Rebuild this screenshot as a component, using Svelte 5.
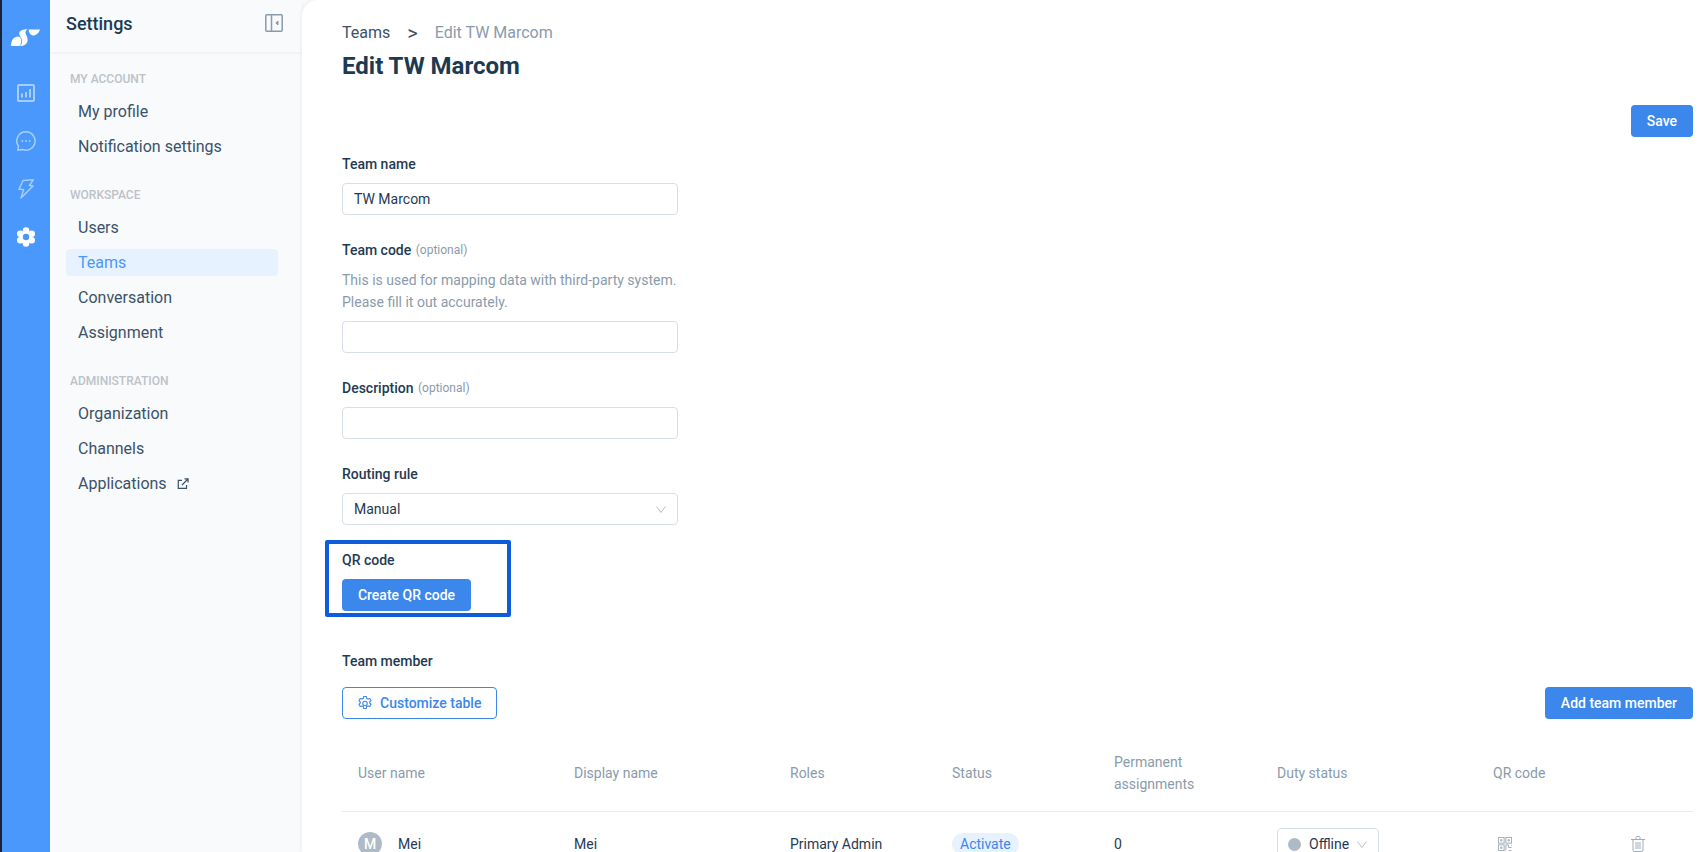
<script>
  const navSections = [
    { title: 'MY ACCOUNT', items: ['My profile', 'Notification settings'] },
    { title: 'WORKSPACE', items: ['Users', 'Teams', 'Conversation', 'Assignment'] },
    { title: 'ADMINISTRATION', items: ['Organization', 'Channels', 'Applications'] }
  ];

  const columns = ['User name', 'Display name', 'Roles', 'Status', 'Permanent assignments', 'Duty status', 'QR code', ''];
</script>

<div class="layout">
  <nav class="rail">
    <svg class="logo" viewBox="0 0 30 18" width="30" height="18">
      <path d="M0 18C0 12 3 8.500 7 8.500c1.300 0 2.200.8 2.800 2 .8 2.500.6 5-1.300 7.500z" fill="#fff" />
      <path d="M8.500 4C10 2 13 1 16.500 1.200 14.500 2.500 14 4 14.800 6c1 2.500 2.200 4 1.700 7-.5 3-3.500 5-7.500 5 2.500-2.500 2.500-5 1.500-7.500-1-2-3-4-2-6.500z" fill="#fff" />
      <path d="M17.500 1.500H29C28 5 25 7.500 22 7.500c-2.500 0-4-3-4.500-6z" fill="#fff" />
    </svg>
    <div class="rail-item">
      <svg viewBox="0 0 18 18" width="18" height="18" fill="none" stroke="#a9cdfb" stroke-width="2">
        <rect x="1" y="1" width="16" height="16" rx="1" />
        <path d="M5 13.500V9.500M9 13.500V8M13 13.500V5" />
      </svg>
    </div>
    <div class="rail-item">
      <svg viewBox="0 0 20 20" width="20" height="20" fill="none" stroke="#a9cdfb" stroke-width="1.500">
        <path d="M10 .8a9.200 9.200 0 1 1-3.600 17.700L1.800 19.200l.7-3.900A9.200 9.200 0 0 1 10 .8z" stroke-linejoin="round" />
        <circle cx="6.400" cy="10" r=".9" fill="#a9cdfb" stroke="none" />
        <circle cx="10" cy="10" r=".9" fill="#a9cdfb" stroke="none" />
        <circle cx="13.600" cy="10" r=".9" fill="#a9cdfb" stroke="none" />
      </svg>
    </div>
    <div class="rail-item">
      <svg viewBox="0 0 16 20" width="16" height="20" fill="none" stroke="#a9cdfb" stroke-width="1.500" stroke-linejoin="round">
        <path d="M5 1.500 15.200.8 11.500 6.500 15 7 3 19l2.600-8.400L1 10.300z" />
      </svg>
    </div>
    <div class="rail-item">
      <svg viewBox="0 0 20 20" width="20" height="20">
        <g fill="#fff">
          <circle cx="10" cy="3.500" r="3.300" />
          <circle cx="10" cy="16.500" r="3.300" />
          <circle cx="4.300" cy="6.700" r="3.300" />
          <circle cx="15.700" cy="6.700" r="3.300" />
          <circle cx="4.300" cy="13.300" r="3.300" />
          <circle cx="15.700" cy="13.300" r="3.300" />
          <circle cx="10" cy="10" r="6" />
        </g>
        <circle cx="10" cy="10" r="3.200" fill="#4b98fc" />
      </svg>
    </div>
  </nav>

  <aside class="sidebar">
    <header class="sidebar-head">
      <span class="sidebar-title">Settings</span>
      <svg viewBox="0 0 18 18" width="18" height="18" fill="none" stroke="#8a9bab" stroke-width="1.500">
        <rect x=".8" y=".8" width="16.400" height="16.400" rx="1" />
        <path d="M6.500 1v16" />
        <path d="M13 7 10.800 9 13 11z" fill="#8a9bab" stroke-width="1" />
      </svg>
    </header>
    <div class="sidebar-body">
      {#each navSections as section}
        <div class="nav-section">
          <div class="nav-title">{section.title}</div>
          {#each section.items as item}
            <div class="nav-item" class:active={item === 'Teams'}>
              {item}
              {#if item === 'Applications'}
                <svg class="ext" viewBox="0 0 12 12" width="12" height="12" fill="none" stroke="#3b5268" stroke-width="1.200">
                  <path d="M9.500 7v3.400H1.300V2.300H5" />
                  <path d="M5 7 11 1M7.500.9h3.600v3.600" />
                </svg>
              {/if}
            </div>
          {/each}
        </div>
      {/each}
    </div>
  </aside>

  <main class="content">
    <div class="breadcrumb">
      <span class="crumb">Teams</span>
      <span class="sep">&gt;</span>
      <span class="crumb-current">Edit TW Marcom</span>
    </div>
    <h1 class="page-title">Edit TW Marcom</h1>

    <div class="save-row">
      <button class="btn primary">Save</button>
    </div>

    <div class="form">
      <div class="field">
        <div class="label">Team name</div>
        <input class="input" value="TW Marcom" />
      </div>

      <div class="field">
        <div class="label">Team code <span class="optional">(optional)</span></div>
        <p class="hint">This is used for mapping data with third-party system.<br />Please fill it out accurately.</p>
        <input class="input" />
      </div>

      <div class="field">
        <div class="label">Description <span class="optional">(optional)</span></div>
        <input class="input" />
      </div>

      <div class="field">
        <div class="label">Routing rule</div>
        <div class="input select">
          Manual
          <svg viewBox="0 0 10 7" width="10" height="7" fill="none" stroke="#b4bfca" stroke-width="1">
            <path d="M.5.5l4.500 6 4.500-6" />
          </svg>
        </div>
      </div>

      <div class="field qr-field">
        <div class="highlight"></div>
        <div class="label">QR code</div>
        <button class="btn primary qr-btn">Create QR code</button>
      </div>
    </div>

    <div class="label member-label">Team member</div>
    <div class="member-actions">
      <button class="btn outline">
        <svg viewBox="1 0.500 14 15" width="14" height="15" fill="none" stroke="#3b87ec" stroke-width="1.100" stroke-linejoin="round">
          <path d="M6.700 1h2.600l.4 1.900 1.300.7 1.800-.6 1.300 2.200-1.400 1.300v1l1.400 1.300-1.300 2.200-1.800-.6-1.300.7-.4 1.900H6.700l-.4-1.900-1.300-.7-1.800.6-1.300-2.200 1.400-1.300v-1L1.900 5.200 3.200 3l1.800.6 1.300-.7z" />
          <circle cx="8" cy="8" r="2.200" />
        </svg>
        Customize table
      </button>
      <button class="btn primary">Add team member</button>
    </div>

    <div class="table">
      <div class="row head">
        {#each columns as col}
          <div class="cell">{col}</div>
        {/each}
      </div>
      <div class="row">
        <div class="cell user">
          <span class="avatar">M</span>
          Mei
        </div>
        <div class="cell">Mei</div>
        <div class="cell">Primary Admin</div>
        <div class="cell"><span class="badge">Activate</span></div>
        <div class="cell">0</div>
        <div class="cell">
          <div class="duty">
            <span class="dot"></span>
            Offline
            <svg viewBox="0 0 10 7" width="10" height="7" fill="none" stroke="#b4bfca" stroke-width="1">
              <path d="M.5.5l4.500 6 4.500-6" />
            </svg>
          </div>
        </div>
        <div class="cell">
          <svg class="qr-icon" viewBox="0 0 16 16" width="14" height="14" fill="none" stroke="#a0adb9" stroke-width="1.100">
            <rect x=".5" y=".5" width="6.500" height="6.500" />
            <rect x="9" y=".5" width="6.500" height="6.500" />
            <rect x=".5" y="9" width="6.500" height="6.500" />
            <path d="M3 3h1.500v1.500H3zM11.500 3H13v1.500h-1.500zM3 11.500h1.500V13H3z" />
            <path d="M9 15.500V9h3v3h3.500M15.500 9v1M12.500 15.500h3" />
          </svg>
        </div>
        <div class="cell">
          <svg class="trash" viewBox="0 0 14 16" width="14" height="16" fill="none" stroke="#a0adb9" stroke-width="1">
            <path d="M0 3.500h14M5 3.500V1.500c0-.6.400-1 1-1h2c.6 0 1 .4 1 1v2" />
            <path d="M2 3.500v11c0 .6.400 1 1 1h8c.6 0 1-.4 1-1v-11" />
            <path d="M5 6v7M7 6v7M9 6v7" />
          </svg>
        </div>
      </div>
    </div>
  </main>
</div>

<style>
  :global(body) {
    margin: 0;
    overflow: hidden;
    font-family: Roboto, "Liberation Sans", sans-serif;
    color: #1f3a52;
  }

  .layout {
    display: flex;
    height: 852px;
    overflow: hidden;
    background: #f8fafc;
  }

  .rail {
    flex: 0 0 48px;
    display: flex;
    flex-direction: column;
    align-items: center;
    background: #4b98fc;
    border-left: 2px solid #1a2238;
  }

  .logo {
    margin: 28px 0 23px;
  }

  .rail-item {
    height: 48px;
    display: flex;
    align-items: center;
    justify-content: center;
  }

  .sidebar {
    flex: 0 0 252px;
    display: flex;
    flex-direction: column;
  }

  .sidebar-head {
    height: 52px;
    box-sizing: border-box;
    display: flex;
    align-items: center;
    justify-content: space-between;
    padding: 0 19px 6px 16px;
    box-shadow: 0 1px 3px rgba(30, 50, 70, 0.06);
  }

  .sidebar-title {
    font-size: 18px;
    font-weight: 500;
    color: #1c3a52;
  }

  .sidebar-body {
    padding: 19px 24px 0 16px;
  }

  .nav-section {
    margin-bottom: 27px;
  }

  .nav-title {
    padding-left: 4px;
    margin-bottom: 11px;
    font-size: 12px;
    line-height: 16px;
    font-weight: 500;
    color: #bcc2c8;
  }

  .nav-item {
    height: 27px;
    margin-bottom: 8px;
    padding-left: 12px;
    display: flex;
    align-items: center;
    font-size: 16px;
    color: #3b5268;
    border-radius: 4px;
  }

  .nav-item:last-child {
    margin-bottom: 0;
  }

  .nav-item.active {
    background: #e6f2ff;
    color: #4b98fc;
  }

  .ext {
    margin-left: 10px;
  }

  .content {
    flex: 1;
    min-width: 0;
    box-sizing: border-box;
    padding: 23px 12px 0 40px;
    background: #fff;
    border-top-left-radius: 16px;
    box-shadow: -1px 0 4px rgba(30, 50, 70, 0.06);
  }

  .breadcrumb {
    display: flex;
    align-items: center;
    font-size: 16px;
    line-height: 20px;
  }

  .crumb {
    color: #3b5268;
  }

  .sep {
    margin: 0 17px;
    font-size: 20px;
    color: #3b5268;
  }

  .crumb-current {
    color: #8a9bab;
  }

  .page-title {
    margin: 7px 0 0;
    font-size: 24px;
    line-height: 32px;
    font-weight: 700;
    color: #1c3a52;
  }

  .save-row {
    margin-top: 23px;
    display: flex;
    justify-content: flex-end;
  }

  .btn {
    height: 32px;
    box-sizing: border-box;
    padding: 0 15px;
    font-family: inherit;
    font-size: 14px;
    font-weight: 500;
    border-radius: 4px;
    border: 1px solid transparent;
    cursor: pointer;
  }

  .btn.primary {
    background: #3b87ec;
    color: #fff;
  }

  .btn.outline {
    display: flex;
    align-items: center;
    gap: 8px;
    background: #fff;
    color: #3b87ec;
    border-color: #3b87ec;
  }

  .form {
    margin-top: 17px;
    display: flex;
    flex-direction: column;
    gap: 25px;
    width: 336px;
  }

  .label {
    font-size: 14px;
    line-height: 20px;
    font-weight: 500;
    color: #1f3a52;
    margin-bottom: 9px;
  }

  .optional {
    position: relative;
    top: -1px;
    margin-left: 1px;
    font-size: 12px;
    line-height: 1;
    font-weight: 400;
    color: #8a9bab;
  }

  .hint {
    margin: 0 0 8px;
    font-size: 14px;
    line-height: 22px;
    color: #8a9bab;
  }

  .input {
    display: block;
    width: 100%;
    height: 32px;
    box-sizing: border-box;
    padding: 0 11px;
    font-family: inherit;
    font-size: 14px;
    color: #1f3a52;
    background: #fff;
    border: 1px solid #d8dfe6;
    border-radius: 4px;
    outline: none;
  }

  .select {
    display: flex;
    align-items: center;
    justify-content: space-between;
  }

  .qr-field {
    position: relative;
  }

  .highlight {
    position: absolute;
    left: -17px;
    top: -10px;
    width: 186px;
    height: 77px;
    box-sizing: border-box;
    border: 4px solid #0d5cdc;
    border-radius: 2px;
    pointer-events: none;
  }

  .qr-btn {
    width: 129px;
    padding: 0;
  }

  .member-label {
    margin: 40px 0 16px;
  }

  .member-actions {
    display: flex;
    justify-content: space-between;
  }

  .table {
    margin-top: 16px;
  }

  .row {
    display: grid;
    grid-template-columns: 216px 216px 162px 162px 163px 216px 136px 1fr;
    align-items: center;
    padding: 16px 0;
    font-size: 14px;
    color: #1f3a52;
  }

  .row.head {
    min-height: 76px;
    box-sizing: border-box;
    line-height: 22px;
    color: #8a9bab;
    border-bottom: 1px solid #e8ecef;
  }

  .cell {
    padding-left: 16px;
    min-width: 0;
  }

  .head .cell:nth-child(5) {
    padding-right: 30px;
  }

  .user {
    display: flex;
    align-items: center;
    gap: 16px;
  }

  .avatar {
    width: 24px;
    height: 24px;
    border-radius: 50%;
    display: flex;
    align-items: center;
    justify-content: center;
    background: #aebac5;
    color: #fff;
    font-size: 14px;
    font-weight: 500;
  }

  .badge {
    display: inline-block;
    padding: 0 8px;
    line-height: 22px;
    border-radius: 11px;
    background: #e6f2ff;
    color: #3b87ec;
  }

  .duty {
    width: 102px;
    height: 32px;
    box-sizing: border-box;
    padding: 0 8px 0 10px;
    display: flex;
    align-items: center;
    gap: 8px;
    border: 1px solid #d8dfe6;
    border-radius: 4px;
  }

  .dot {
    width: 13px;
    height: 13px;
    border-radius: 50%;
    background: #aebac5;
  }

  .qr-icon {
    display: block;
    margin-left: 5px;
  }

  .trash {
    display: block;
    margin-left: 2px;
  }
</style>
